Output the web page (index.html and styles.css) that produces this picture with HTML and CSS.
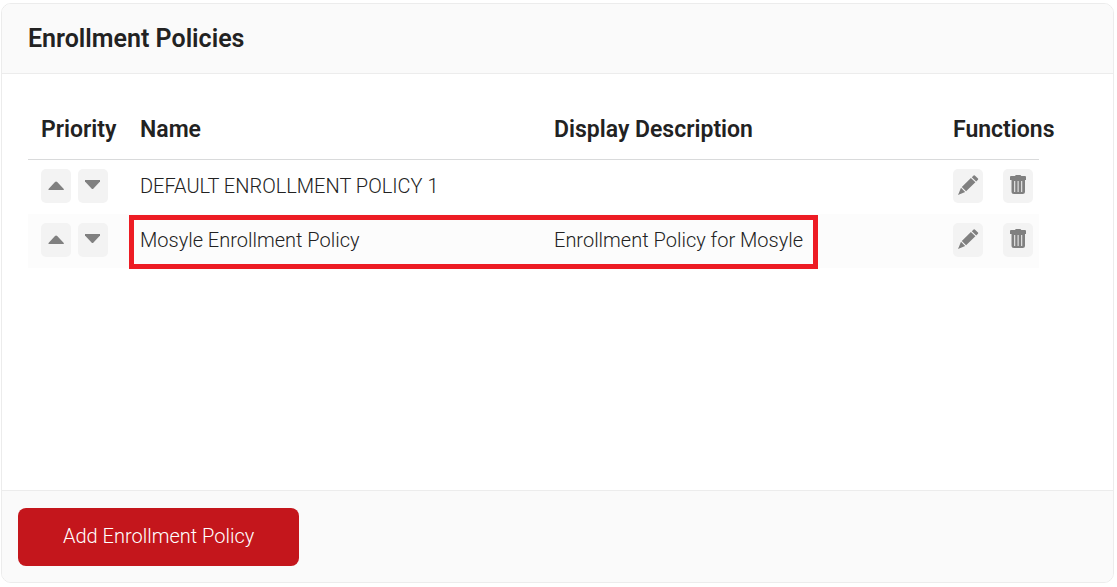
FILE: index.html
```html
<!DOCTYPE html>
<html lang="en">
<head>
<meta charset="utf-8">
<meta name="viewport" content="width=device-width, initial-scale=1">
<title>Enrollment Policies</title>
<link rel="stylesheet" href="styles.css">
</head>
<body>
<svg class="sprite" aria-hidden="true">
  <symbol id="up" viewBox="0 0 30 34"><path d="M7.500 21V20L14 13Q15.100 11.800 16.200 13L22.800 20V21Z"/></symbol>
  <symbol id="down" viewBox="0 0 30 34"><path d="M7 11H22V12.500L15.500 19.600Q14.500 20.600 13.500 19.600L7 12.500Z"/></symbol>
  <symbol id="pencil" viewBox="0 0 30 34"><path d="M5 26L8 18.800L12.200 23.100ZM8.800 17.900L17.900 8.900L22.400 13.300L13.100 22.300ZM18.800 8.200L20.600 6.400Q21.200 5.900 21.800 6.400L25 9.600Q25.500 10.200 25 10.800L23.200 12.500Z"/></symbol>
  <symbol id="trash" viewBox="0 0 30 34"><path fill-rule="evenodd" d="M12 7Q12.300 6 13.300 6H17Q18 6 18.300 7H22Q23 7 23 8V11H22V22.500Q22 25 19.500 25H11Q8.500 25 8.500 22.500V11H7V8Q7 7 8 7ZM11.200 12V23H12.200V12ZM14.600 12V23H15.600V12ZM18.200 12V23H19.200V12Z"/></symbol>
</svg>
<main class="card">
  <header class="card-header"><h1 class="card-title">Enrollment Policies</h1></header>
  <section class="card-body">
    <table class="policies">
      <colgroup><col class="col-priority"><col class="col-name"><col class="col-description"><col class="col-functions"></colgroup>
      <thead>
        <tr><th scope="col">Priority</th><th scope="col">Name</th><th scope="col">Display Description</th><th scope="col">Functions</th></tr>
      </thead>
      <tbody>
        <tr>
          <td><div class="actions order"><button class="icon-button" type="button" aria-label="Move up"><svg><use href="#up"/></svg></button><button class="icon-button" type="button" aria-label="Move down"><svg><use href="#down"/></svg></button></div></td>
          <td>DEFAULT ENROLLMENT POLICY 1</td>
          <td></td>
          <td><div class="actions functions"><button class="icon-button" type="button" aria-label="Edit"><svg><use href="#pencil"/></svg></button><button class="icon-button" type="button" aria-label="Delete"><svg><use href="#trash"/></svg></button></div></td>
        </tr>
        <tr class="highlighted">
          <td><div class="actions order"><button class="icon-button" type="button" aria-label="Move up"><svg><use href="#up"/></svg></button><button class="icon-button" type="button" aria-label="Move down"><svg><use href="#down"/></svg></button></div></td>
          <td>Mosyle Enrollment Policy<span class="highlight"></span></td>
          <td>Enrollment Policy for Mosyle</td>
          <td><div class="actions functions"><button class="icon-button" type="button" aria-label="Edit"><svg><use href="#pencil"/></svg></button><button class="icon-button" type="button" aria-label="Delete"><svg><use href="#trash"/></svg></button></div></td>
        </tr>
      </tbody>
    </table>
  </section>
  <footer class="card-footer"><button class="primary-button" type="button">Add Enrollment Policy</button></footer>
</main>
</body>
</html>
```
FILE: styles.css
```css
* { box-sizing: border-box; }

body {
  margin: 0;
  padding: 3px 3px 4px 1px;
  min-height: 100vh;
  display: flex;
  background: #fff;
  color: #222;
  font-family: Roboto, "Liberation Sans", sans-serif;
  font-size: 20px;
  font-weight: 300;
  line-height: 24px;
}

.sprite { position: absolute; width: 0; height: 0; }

.card {
  flex: 1;
  display: flex;
  flex-direction: column;
  border: 1px solid #ececec;
  border-radius: 10px;
  overflow: hidden;
}

.card-header {
  padding: 19px 26px;
  background: #fafafa;
  border-bottom: 1px solid #ececec;
}

.card-title {
  margin: 0;
  font-size: 25px;
  font-weight: 600;
  line-height: 31px;
}

.card-body {
  flex: 1;
  padding: 25px 74px 25px 26px;
}

.policies {
  width: 100%;
  table-layout: fixed;
  border-collapse: separate;
  border-spacing: 0;
}

.col-priority, .col-functions { width: 99px; }
.col-name { width: 414px; }

.policies th {
  height: 61px;
  padding: 2px 0 0 13px;
  border-bottom: 1px solid #d9dadb;
  font-size: 23px;
  font-weight: 600;
  text-align: left;
  white-space: nowrap;
}

.policies td {
  height: 54px;
  padding: 0 0 2px 13px;
}

.policies tbody tr:nth-child(even) { background: #fcfcfc; }

.highlighted { position: relative; }

.highlight {
  position: absolute;
  top: 1px;
  left: 101px;
  width: 689px;
  height: 54px;
  border: 5px solid #ed1c24;
  pointer-events: none;
}

.actions { display: flex; }
.order { gap: 7px; }
.functions { gap: 20px; }

.icon-button {
  width: 30px;
  height: 34px;
  padding: 0;
  border: 0;
  border-radius: 5px;
  background: #f3f3f3;
  color: #808080;
}

.icon-button svg {
  display: block;
  width: 30px;
  height: 34px;
  fill: currentColor;
}

.card-footer {
  padding: 17px 16px 16px;
  background: #fafafa;
  border-top: 1px solid #ececec;
}

.primary-button {
  display: block;
  height: 58px;
  padding: 0 45px 2px;
  border: 0;
  border-radius: 8px;
  background: #c4161c;
  color: #fff;
  font: inherit;
}
```
